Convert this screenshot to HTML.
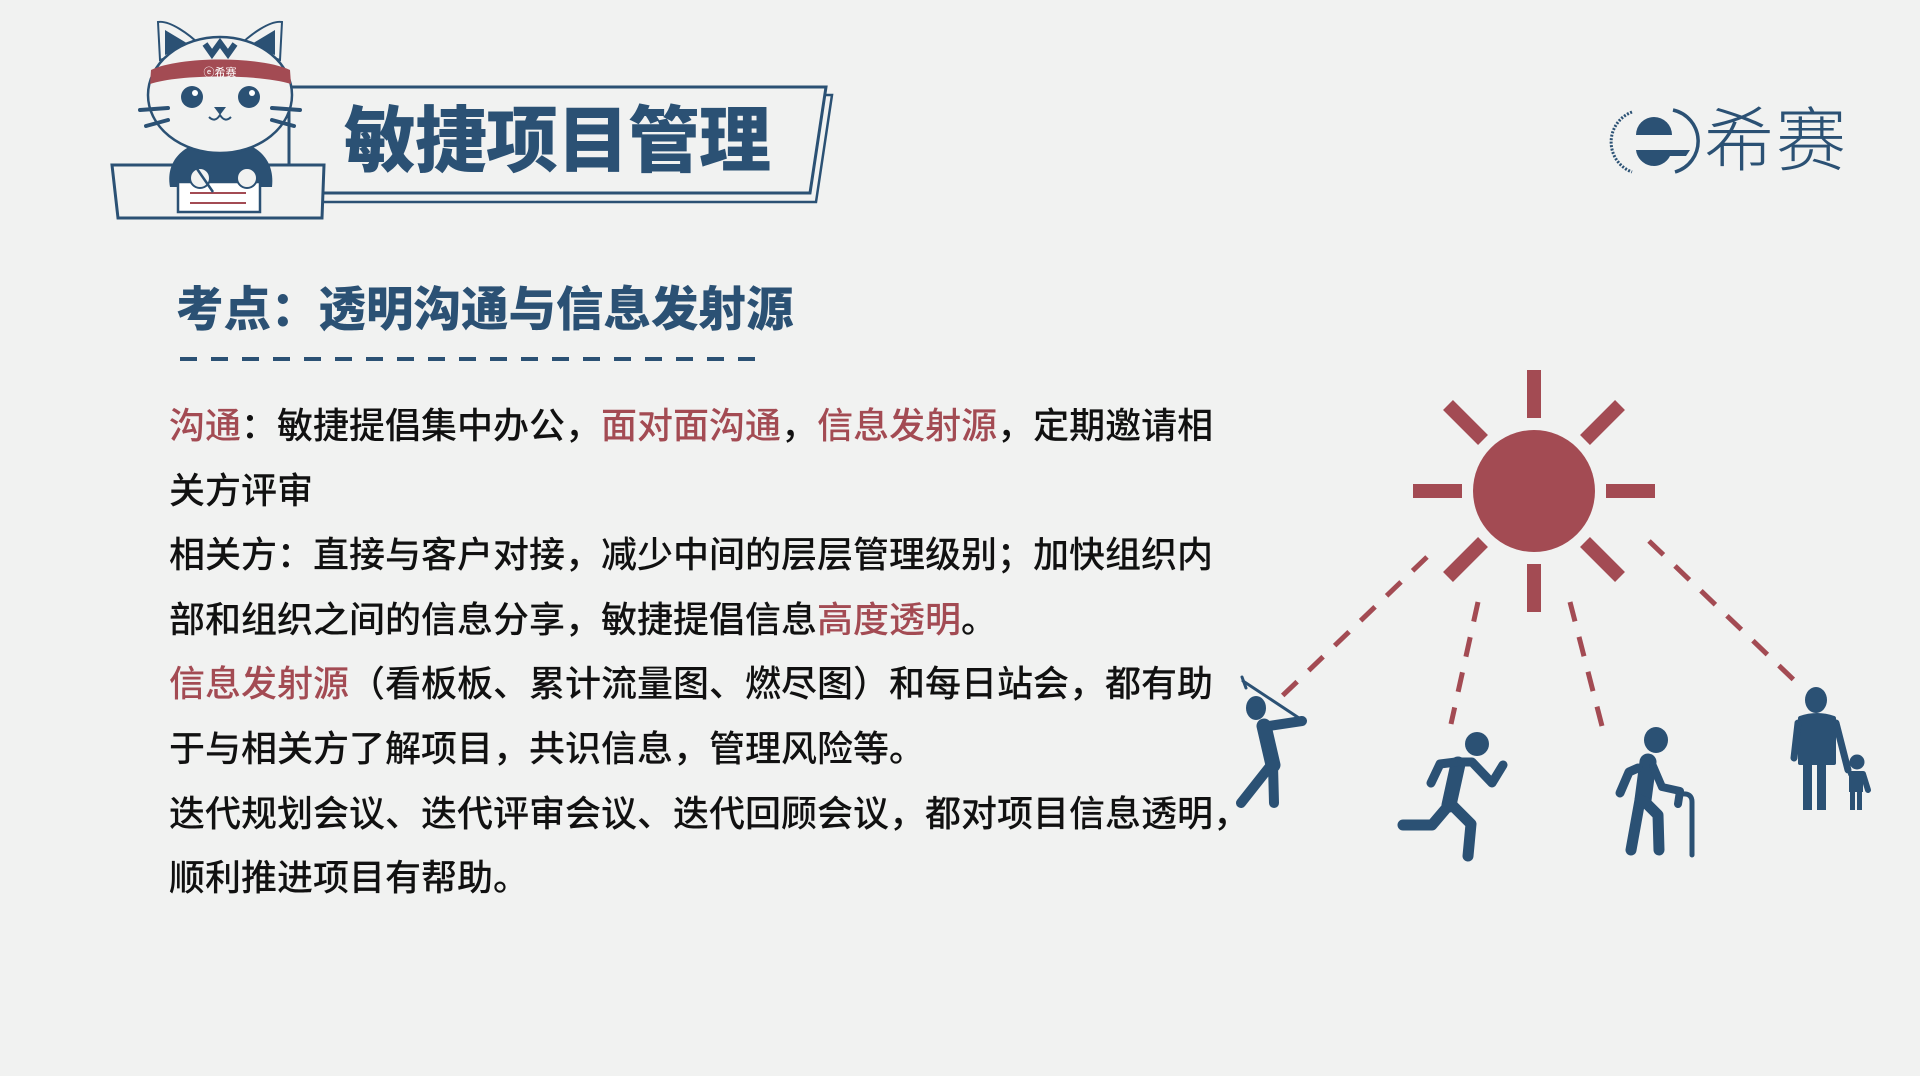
<!DOCTYPE html>
<html><head><meta charset="utf-8"><style>
html,body{margin:0;padding:0;background:#f1f2f1;}
body{width:1920px;height:1076px;position:relative;overflow:hidden;font-family:"Liberation Sans","Noto Sans CJK SC",sans-serif;}
.t{position:absolute;white-space:nowrap;}
.title{left:344px;top:94px;font-size:72px;font-weight:900;color:#2b5174;letter-spacing:-1px;line-height:96px;}
.sub{left:176px;top:280px;font-size:47.5px;font-weight:900;color:#2b5174;line-height:62px;}
.body{left:169px;top:394px;font-size:36px;font-weight:500;color:#111;line-height:64.6px;}
.r{color:#a34b53;}
.logo{left:1704px;top:96px;font-size:70px;color:#2b5174;font-weight:300;line-height:90px;letter-spacing:2px;}
</style></head><body>
<svg width="1920" height="1076" style="position:absolute;left:0;top:0">
<polygon points="300,95 832,95 816,202 300,202" fill="none" stroke="#2b5174" stroke-width="2.5"/>
<polygon points="289,87 826,87 810,193 289,193" fill="#f1f2f1" stroke="#2b5174" stroke-width="3"/>
<polygon points="112,165 324,165 322,218 118,218" fill="#f1f2f1" stroke="#2b5174" stroke-width="3"/>
<path d="M170,187 C165,160 185,140 220,140 C258,140 275,160 272,187 Z" fill="#2b5174"/>
<rect x="178" y="182" width="82" height="30" fill="#fff" stroke="#2b5174" stroke-width="2.5"/>
<line x1="190" y1="193" x2="246" y2="193" stroke="#a34b53" stroke-width="2"/>
<line x1="190" y1="203" x2="246" y2="203" stroke="#a34b53" stroke-width="2"/>
<circle cx="200" cy="178" r="10" fill="#f1f2f1" stroke="#2b5174" stroke-width="2"/>
<circle cx="247" cy="178" r="10" fill="#f1f2f1" stroke="#2b5174" stroke-width="2"/>
<line x1="193" y1="163" x2="213" y2="192" stroke="#2b5174" stroke-width="2.5"/>
<path d="M160,60 L158,22 C170,20 190,35 200,45 Z" fill="#f1f2f1" stroke="#2b5174" stroke-width="2"/>
<path d="M280,60 L282,22 C270,20 250,35 240,45 Z" fill="#f1f2f1" stroke="#2b5174" stroke-width="2"/>
<path d="M165,55 L165,30 L190,45Z" fill="#2b5174"/><path d="M275,55 L275,30 L250,45Z" fill="#2b5174"/>
<ellipse cx="220" cy="95" rx="72" ry="58" fill="#f1f2f1" stroke="#2b5174" stroke-width="2.5"/>
<path d="M205,44 L212,54 L220,43 L228,54 L235,44" fill="none" stroke="#2b5174" stroke-width="6"/>
<path d="M151,70 C180,56 260,56 290,70 L291,84 C260,74 180,74 150,84 Z" fill="#a34b53"/>
<text x="220" y="76" font-size="11" fill="#fff" text-anchor="middle" font-family="Liberation Sans,Noto Sans CJK SC,sans-serif">ⓔ希赛</text>
<circle cx="192" cy="97" r="11" fill="#2b5174"/><circle cx="249" cy="97" r="11" fill="#2b5174"/>
<circle cx="195" cy="93" r="3" fill="#fff"/><circle cx="252" cy="93" r="3" fill="#fff"/>
<path d="M214,107 L226,107 L220,115Z" fill="#2b5174"/>
<path d="M209,117 Q215,123 220,115 Q225,123 231,117" fill="none" stroke="#2b5174" stroke-width="2"/>
<path d="M140,110 L168,108 M146,126 L168,120 M300,110 L272,108 M294,126 L272,120" stroke="#2b5174" stroke-width="4" stroke-linecap="round"/>
<path d="M1632,112 A32,32 0 0 0 1632,172" fill="none" stroke="#2b5174" stroke-width="3" stroke-dasharray="2,1.5"/>
<path d="M1673,110 A32,32 0 0 1 1675,172" fill="none" stroke="#2b5174" stroke-width="3.5"/>
<path d="M1636,135 A18,18 0 0 1 1672,135 Z" fill="#2b5174"/>
<path d="M1636,150 L1690,150 L1686,156 L1670,156 A18,18 0 0 1 1636,150 Z" fill="#2b5174"/>
<line x1="180" y1="359" x2="760" y2="359" stroke="#2b5174" stroke-width="4" stroke-dasharray="17,14"/>
<g fill="#a34b53">
<circle cx="1534" cy="491" r="61"/>
<g stroke="#a34b53" stroke-width="14">
<line x1="1534" y1="370" x2="1534" y2="418"/>
<line x1="1534" y1="564" x2="1534" y2="612"/>
<line x1="1413" y1="491" x2="1462" y2="491"/>
<line x1="1606" y1="491" x2="1655" y2="491"/>
<line x1="1448" y1="405" x2="1483" y2="440"/>
<line x1="1585" y1="440" x2="1620" y2="405"/>
<line x1="1448" y1="577" x2="1483" y2="542"/>
<line x1="1585" y1="542" x2="1620" y2="577"/>
</g></g>
<g stroke="#a34b53" stroke-width="5" stroke-dasharray="20,16">
<line x1="1427" y1="557" x2="1278" y2="700"/>
<line x1="1478" y1="602" x2="1451" y2="724"/>
<line x1="1570" y1="602" x2="1602" y2="726"/>
<line x1="1649" y1="541" x2="1796" y2="682"/>
</g>
<g fill="#2b5174" stroke="#2b5174" stroke-linecap="round" stroke-linejoin="round">
<ellipse cx="1256" cy="708" rx="10" ry="12" stroke="none"/>
<path d="M1243,681 L1302,720" stroke-width="3" fill="none"/>
<path d="M1242,677 L1246,688" stroke-width="3" fill="none"/>
<path d="M1262,727 L1302,721" stroke-width="10" fill="none"/>
<path d="M1264,726 L1273,765" stroke-width="15" fill="none"/>
<path d="M1271,765 L1241,803 M1273,765 L1274,803" stroke-width="10" fill="none"/>
<ellipse cx="1477" cy="744" rx="12" ry="12" stroke="none"/>
<path d="M1458,764 L1449,805" stroke-width="15" fill="none"/>
<path d="M1456,762 L1440,764 L1431,783" stroke-width="9" fill="none"/>
<path d="M1462,762 L1472,762 L1492,783 L1503,765" stroke-width="9" fill="none"/>
<path d="M1449,805 L1432,825 L1403,825" stroke-width="11" fill="none"/>
<path d="M1452,805 L1471,824 L1468,856" stroke-width="11" fill="none"/>
<ellipse cx="1656" cy="740" rx="12" ry="13" stroke="none"/>
<path d="M1648,762 L1643,800" stroke-width="17" fill="none"/>
<path d="M1638,768 L1629,772 L1620,793" stroke-width="9" fill="none"/>
<path d="M1653,766 L1662,787 L1680,791 L1678,804" stroke-width="8" fill="none"/>
<path d="M1640,800 L1631,850 M1645,802 L1658,815 L1659,850" stroke-width="11" fill="none"/>
<path d="M1682,794 Q1692,793 1692,802 L1692,855" stroke-width="5" fill="none"/>
<ellipse cx="1816" cy="700" rx="11" ry="13" stroke="none"/>
<path d="M1800,718 Q1817,712 1834,718 L1834,763 L1800,763 Z" stroke-width="4"/>
<path d="M1798,723 L1794,758 M1836,723 L1848,770" stroke-width="7" fill="none"/>
<rect x="1803" y="762" width="9" height="48" stroke="none"/>
<rect x="1817" y="762" width="9" height="48" stroke="none"/>
<circle cx="1857" cy="762" r="7.5" stroke="none"/>
<path d="M1851,774 L1863,774 L1868,790" stroke-width="6" fill="none"/>
<rect x="1849" y="772" width="14" height="20" stroke="none"/>
<rect x="1850" y="790" width="5" height="20" stroke="none"/>
<rect x="1857" y="790" width="5" height="20" stroke="none"/>
</g>
</svg>
<div class="t title">敏捷项目管理</div>
<div class="t logo">希赛</div>
<div class="t sub">考点：透明沟通与信息发射源</div>
<div class="t body"><span class="r">沟通</span>：敏捷提倡集中办公，<span class="r">面对面沟通</span>，<span class="r">信息发射源</span>，定期邀请相<br>关方评审<br>相关方：直接与客户对接，减少中间的层层管理级别；加快组织内<br>部和组织之间的信息分享，敏捷提倡信息<span class="r">高度透明</span>。<br><span class="r">信息发射源</span>（看板板、累计流量图、燃尽图）和每日站会，都有助<br>于与相关方了解项目，共识信息，管理风险等。<br>迭代规划会议、迭代评审会议、迭代回顾会议，都对项目信息透明，<br>顺利推进项目有帮助。</div>
</body></html>
